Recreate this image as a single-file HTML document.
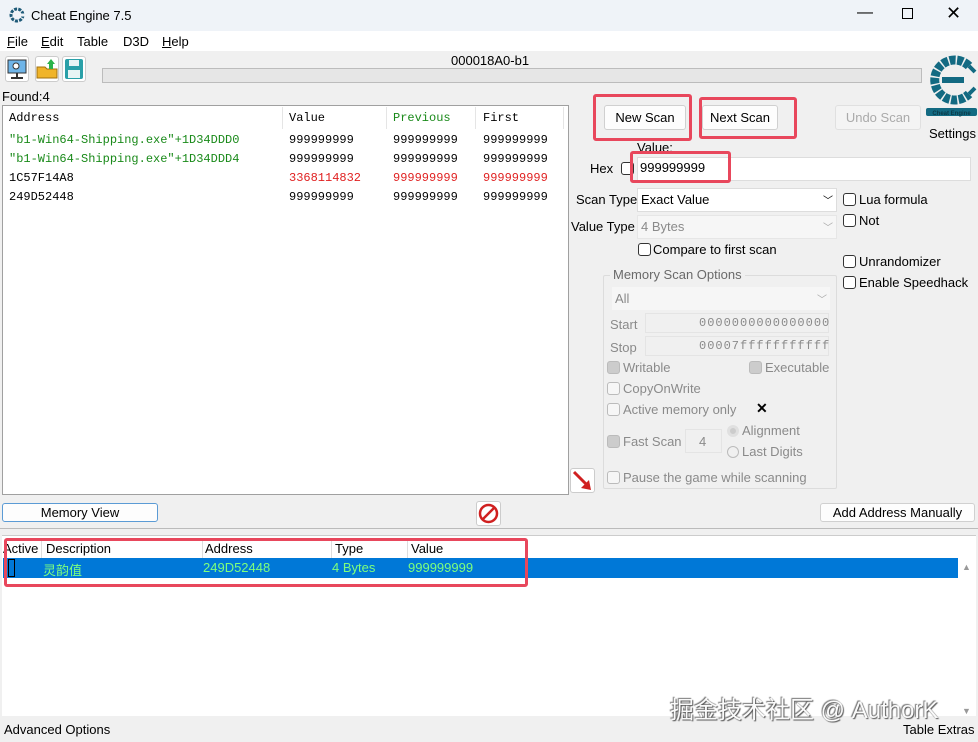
<!DOCTYPE html>
<html><head><meta charset="utf-8"><style>
*{margin:0;padding:0;box-sizing:border-box}
body{width:978px;height:742px;overflow:hidden;background:#f0f0f0;font-family:"Liberation Sans","Noto Sans CJK SC",sans-serif;font-size:13px;color:#000;position:relative}
.a{position:absolute;white-space:nowrap}
.mono{font-family:"Liberation Mono",monospace;font-size:12px}
.btn{position:absolute;background:#fdfdfd;border:1px solid #d0d0d0;border-radius:3px;text-align:center}
.red{position:absolute;border:3px solid #e8475c;border-radius:3px}
.cb{position:absolute;width:13px;height:13px;border:1px solid #333;border-radius:3px;background:#fff}
.cbg{position:absolute;width:13px;height:13px;border:1px solid #bbb;border-radius:3px;background:#f6f6f6}
.g{color:#8a8a8a}
</style></head><body>
<div class="a" style="left:0;top:0;width:978px;height:31px;background:#eff3f8"></div>
<svg class="a" style="left:9px;top:7px" width="16" height="16" viewBox="0 0 16 16"><circle cx="8" cy="8" r="6" fill="none" stroke="#1e5a78" stroke-width="3" stroke-dasharray="3 1.2"/><rect x="9" y="6.5" width="7" height="3" fill="#eff3f8"/></svg>
<div class="a" style="left:31px;top:8px;font-size:13px">Cheat Engine 7.5</div>
<div class="a" style="left:857px;top:4px;font-size:16px">—</div>
<div class="a" style="left:902px;top:8px;width:11px;height:11px;border:1px solid #000"></div>
<div class="a" style="left:946px;top:3px;font-size:18px">✕</div>
<div class="a" style="left:0;top:31px;width:978px;height:20px;background:#fff"></div>
<div class="a" style="left:7px;top:34px"><u>F</u>ile</div>
<div class="a" style="left:41px;top:34px"><u>E</u>dit</div>
<div class="a" style="left:77px;top:34px">Table</div>
<div class="a" style="left:123px;top:34px">D3D</div>
<div class="a" style="left:162px;top:34px"><u>H</u>elp</div>
<div class="a" style="left:5px;top:56px;width:24px;height:26px;background:#fff;border:1px solid #ccc;border-radius:3px"><svg width="22" height="24"><rect x="2" y="3" width="18" height="13" fill="#6fb5e8" stroke="#333"/><circle cx="10" cy="9" r="3" fill="#fff" stroke="#333"/><line x1="11" y1="20" x2="11" y2="16" stroke="#333" stroke-width="2"/><line x1="5" y1="21" x2="17" y2="21" stroke="#333" stroke-width="2"/></svg></div>
<div class="a" style="left:35px;top:56px;width:24px;height:26px;background:#fff;border:1px solid #ccc;border-radius:3px"><svg width="22" height="24"><path d="M1 10h8l2 2h10v9H1z" fill="#f0b429" stroke="#a07010"/><path d="M15 2l4 5h-2v5h-4V7h-2z" fill="#2cb34a"/></svg></div>
<div class="a" style="left:62px;top:56px;width:24px;height:26px;background:#fff;border:1px solid #ccc;border-radius:3px"><svg width="22" height="24"><rect x="2" y="2" width="18" height="20" rx="2" fill="#2aa0a8"/><rect x="6" y="3" width="10" height="6" fill="#e8f4f4"/><rect x="5" y="13" width="12" height="8" fill="#e8f4f4"/></svg></div>
<div class="a" style="left:451px;top:53px">000018A0-b1</div>
<div class="a" style="left:102px;top:68px;width:820px;height:15px;background:#e6e6e6;border:1px solid #bcbcbc"></div>
<div class="a" style="left:2px;top:89px">Found:4</div>
<svg class="a" style="left:925px;top:52px" width="53" height="66" viewBox="0 0 53 66"><path d="M44 14 A20 20 0 1 0 44 42" fill="none" stroke="#136a82" stroke-width="9" stroke-dasharray="6 1.5"/><path d="M17 25h22v6H17z" fill="#136a82"/><path d="M44 14 L50 20 M44 42 L50 36" stroke="#136a82" stroke-width="4"/><rect x="1" y="56" width="51" height="8" rx="2" fill="#136a82"/><text x="26.5" y="63" font-size="6" fill="#0b3a48" text-anchor="middle" font-weight="bold">Cheat Engine</text></svg>
<div class="a" style="left:929px;top:126px">Settings</div>
<div class="a" style="left:2px;top:105px;width:567px;height:390px;background:#fff;border:1px solid #a0a0a0"></div>
<div class="a" style="left:282px;top:107px;width:1px;height:22px;background:#e5e5e5"></div>
<div class="a" style="left:386px;top:107px;width:1px;height:22px;background:#e5e5e5"></div>
<div class="a" style="left:475px;top:107px;width:1px;height:22px;background:#e5e5e5"></div>
<div class="a" style="left:563px;top:107px;width:1px;height:22px;background:#e5e5e5"></div>
<div class="a mono" style="left:9px;top:111px">Address</div>
<div class="a mono" style="left:289px;top:111px">Value</div>
<div class="a mono" style="left:393px;top:111px;color:#1a8a1a">Previous</div>
<div class="a mono" style="left:483px;top:111px">First</div>
<div class="a mono" style="left:9px;top:133px;color:#1a8a1a">"b1-Win64-Shipping.exe"+1D34DDD0</div>
<div class="a mono" style="left:289px;top:133px">999999999</div><div class="a mono" style="left:393px;top:133px">999999999</div><div class="a mono" style="left:483px;top:133px">999999999</div>
<div class="a mono" style="left:9px;top:152px;color:#1a8a1a">"b1-Win64-Shipping.exe"+1D34DDD4</div>
<div class="a mono" style="left:289px;top:152px">999999999</div><div class="a mono" style="left:393px;top:152px">999999999</div><div class="a mono" style="left:483px;top:152px">999999999</div>
<div class="a mono" style="left:9px;top:171px">1C57F14A8</div>
<div class="a mono" style="left:289px;top:171px;color:#e02020">3368114832</div><div class="a mono" style="left:393px;top:171px;color:#e02020">999999999</div><div class="a mono" style="left:483px;top:171px;color:#e02020">999999999</div>
<div class="a mono" style="left:9px;top:190px">249D52448</div>
<div class="a mono" style="left:289px;top:190px">999999999</div><div class="a mono" style="left:393px;top:190px">999999999</div><div class="a mono" style="left:483px;top:190px">999999999</div>
<div class="btn" style="left:604px;top:105px;width:82px;height:25px;line-height:23px">New Scan</div>
<div class="btn" style="left:702px;top:105px;width:76px;height:25px;line-height:23px">Next Scan</div>
<div class="btn g" style="left:835px;top:105px;width:86px;height:25px;line-height:23px;color:#aaa;background:#f4f4f4;border-color:#e0e0e0">Undo Scan</div>
<div class="red" style="left:593px;top:94px;width:99px;height:47px"></div>
<div class="red" style="left:699px;top:97px;width:98px;height:42px"></div>
<div class="a" style="left:637px;top:140px">Value:</div>
<div class="a" style="left:590px;top:161px">Hex</div>
<div class="cb" style="left:621px;top:162px"></div>
<div class="a" style="left:637px;top:157px;width:334px;height:24px;background:#fff;border:1px solid #ddd"></div>
<div class="a" style="left:640px;top:160px">999999999</div>
<div class="red" style="left:630px;top:151px;width:101px;height:32px"></div>
<div class="a" style="left:576px;top:192px">Scan Type</div>
<div class="a" style="left:637px;top:188px;width:200px;height:24px;background:#fff;border:1px solid #ddd"></div>
<div class="a" style="left:641px;top:192px">Exact Value</div>
<div class="a" style="left:823px;top:192px;font-size:10px">﹀</div>
<div class="a" style="left:571px;top:219px">Value Type</div>
<div class="a" style="left:637px;top:215px;width:200px;height:24px;background:#f6f6f6;border:1px solid #e6e6e6"></div>
<div class="a g" style="left:641px;top:219px">4 Bytes</div>
<div class="a" style="left:823px;top:219px;font-size:10px;color:#aaa">﹀</div>
<div class="cb" style="left:638px;top:243px"></div>
<div class="a" style="left:653px;top:242px">Compare to first scan</div>
<div class="cb" style="left:843px;top:193px"></div><div class="a" style="left:859px;top:192px">Lua formula</div>
<div class="cb" style="left:843px;top:214px"></div><div class="a" style="left:859px;top:213px">Not</div>
<div class="cb" style="left:843px;top:255px"></div><div class="a" style="left:859px;top:254px">Unrandomizer</div>
<div class="cb" style="left:843px;top:276px"></div><div class="a" style="left:859px;top:275px">Enable Speedhack</div>
<div class="a" style="left:603px;top:275px;width:234px;height:214px;border:1px solid #dcdcdc;border-radius:2px"></div>
<div class="a" style="left:610px;top:267px;background:#f0f0f0;padding:0 3px;color:#6a6a6a">Memory Scan Options</div>
<div class="a" style="left:612px;top:287px;width:218px;height:23px;background:#f6f6f6"></div>
<div class="a g" style="left:615px;top:291px">All</div>
<div class="a" style="left:817px;top:291px;font-size:10px;color:#aaa">﹀</div>
<div class="a g" style="left:610px;top:317px">Start</div>
<div class="a" style="left:645px;top:313px;width:184px;height:20px;border:1px solid #e4e4e4"></div>
<div class="a mono g" style="left:699px;top:316px;letter-spacing:1px">0000000000000000</div>
<div class="a g" style="left:610px;top:340px">Stop</div>
<div class="a" style="left:645px;top:336px;width:184px;height:20px;border:1px solid #e4e4e4"></div>
<div class="a mono g" style="left:699px;top:339px;letter-spacing:1px">00007fffffffffff</div>
<div class="cbg" style="left:607px;top:361px;background:#ccc"></div><div class="a g" style="left:623px;top:360px">Writable</div>
<div class="cbg" style="left:749px;top:361px;background:#ccc"></div><div class="a g" style="left:765px;top:360px">Executable</div>
<div class="cbg" style="left:607px;top:382px"></div><div class="a g" style="left:623px;top:381px">CopyOnWrite</div>
<div class="cbg" style="left:607px;top:403px"></div><div class="a g" style="left:623px;top:402px">Active memory only</div>
<div class="a" style="left:756px;top:400px;font-size:14px;font-weight:bold">✕</div>
<div class="cbg" style="left:607px;top:435px;background:#ccc"></div><div class="a g" style="left:623px;top:434px">Fast Scan</div>
<div class="a" style="left:685px;top:429px;width:37px;height:24px;border:1px solid #e4e4e4"></div>
<div class="a g" style="left:699px;top:434px">4</div>
<div class="a" style="left:727px;top:425px;width:12px;height:12px;border-radius:50%;background:#ccc;border:3px solid #e0e0e0"></div><div class="a g" style="left:742px;top:423px">Alignment</div>
<div class="a" style="left:727px;top:446px;width:12px;height:12px;border-radius:50%;border:1px solid #bbb"></div><div class="a g" style="left:742px;top:444px">Last Digits</div>
<div class="cbg" style="left:607px;top:471px"></div><div class="a g" style="left:623px;top:470px">Pause the game while scanning</div>
<div class="a" style="left:570px;top:468px;width:25px;height:25px;background:#fff;border:1px solid #ccc;border-radius:3px"><svg width="24" height="24"><line x1="3" y1="3" x2="17" y2="17" stroke="#d02020" stroke-width="3"/><path d="M20 21l-10-2 8-8z" fill="#d02020"/></svg></div>
<div class="btn" style="left:2px;top:503px;width:156px;height:19px;line-height:17px;border-color:#5b9bd5">Memory View</div>
<div class="a" style="left:476px;top:501px;width:25px;height:25px;background:#fff;border:1px solid #ccc;border-radius:3px"><svg width="23" height="23"><circle cx="11.5" cy="11.5" r="8.5" fill="none" stroke="#d02020" stroke-width="2.5"/><line x1="6" y1="17" x2="17" y2="6" stroke="#d02020" stroke-width="2.5"/></svg></div>
<div class="btn" style="left:820px;top:503px;width:155px;height:19px;line-height:17px">Add Address Manually</div>
<div class="a" style="left:0;top:528px;width:978px;height:1px;background:#bbb"></div>
<div class="a" style="left:2px;top:535px;width:974px;height:181px;background:#fff;border-top:1px solid #ccc"></div>
<div class="a" style="left:3px;top:541px">Active</div>
<div class="a" style="left:46px;top:541px">Description</div>
<div class="a" style="left:205px;top:541px">Address</div>
<div class="a" style="left:335px;top:541px">Type</div>
<div class="a" style="left:411px;top:541px">Value</div>
<div class="a" style="left:41px;top:538px;width:1px;height:20px;background:#ddd"></div>
<div class="a" style="left:202px;top:538px;width:1px;height:20px;background:#ddd"></div>
<div class="a" style="left:331px;top:538px;width:1px;height:20px;background:#ddd"></div>
<div class="a" style="left:407px;top:538px;width:1px;height:20px;background:#ddd"></div>
<div class="a" style="left:3px;top:558px;width:955px;height:20px;background:#0078d7"></div>
<div class="a" style="left:8px;top:559px;width:7px;height:18px;border:1px solid #000"></div>
<div class="a" style="left:43px;top:560px;color:#7dff7d">灵韵值</div>
<div class="a" style="left:203px;top:560px;color:#7dff7d">249D52448</div>
<div class="a" style="left:332px;top:560px;color:#7dff7d">4 Bytes</div>
<div class="a" style="left:408px;top:560px;color:#7dff7d">999999999</div>
<div class="red" style="left:4px;top:538px;width:524px;height:49px"></div>
<div class="a" style="left:962px;top:562px;font-size:9px;color:#999">▲</div>
<div class="a" style="left:962px;top:706px;font-size:9px;color:#999">▼</div>
<div class="a" style="left:670px;top:690px;font-size:24px;color:#fafafa;text-shadow:1px 1px 1px #555,-1px -1px 1px #777">掘金技术社区 @ AuthorK</div>
<div class="a" style="left:4px;top:722px">Advanced Options</div>
<div class="a" style="left:903px;top:722px">Table Extras</div>
</body></html>
